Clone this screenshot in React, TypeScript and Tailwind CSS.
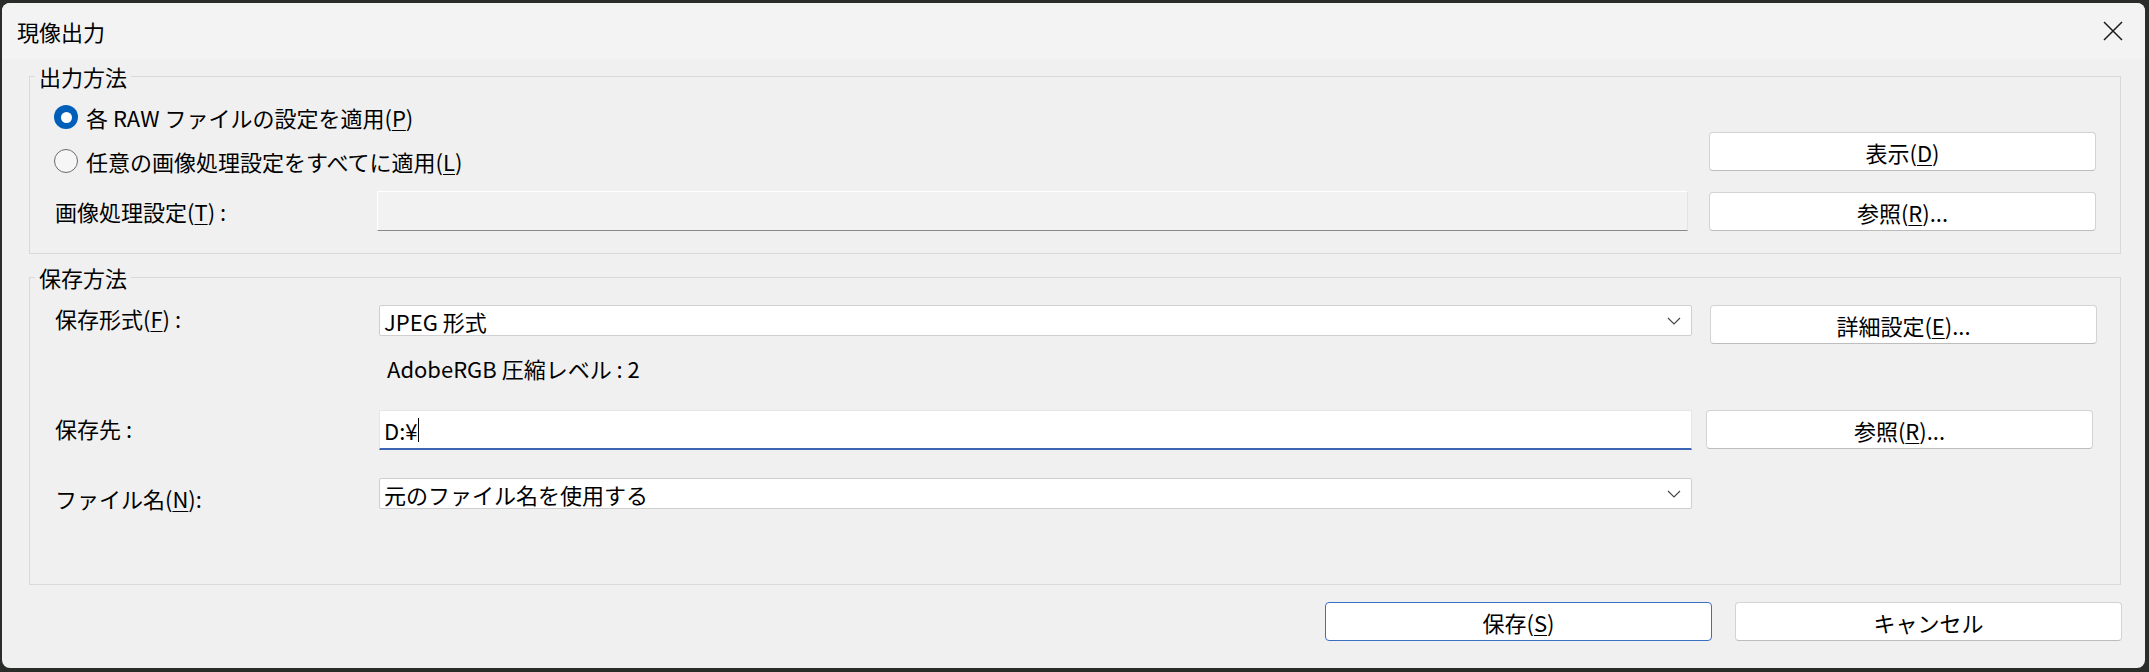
import type { ReactNode } from 'react'

function Key({ children }: { children: ReactNode }) {
  return <span className="underline decoration-1 underline-offset-[3px]">{children}</span>
}

function Button({ children, className = '', focused = false }: { children: ReactNode; className?: string; focused?: boolean }) {
  return (
    <button
      className={`flex h-[39px] w-[387px] items-center justify-center rounded-[4px] border bg-white leading-[22px] ${
        focused ? 'border-[#3b6fc4]' : 'border-[#d3d3d3] border-b-[#bdbdbd]'
      } ${className}`}
    >
      {children}
    </button>
  )
}

function Chevron() {
  return (
    <svg width="14" height="8" viewBox="0 0 14 8" fill="none">
      <polyline points="1,1 7,7 13,1" stroke="#444" strokeWidth="1.1" />
    </svg>
  )
}

function Combo({ value }: { value: string }) {
  return (
    <div className="flex h-[31px] w-[1313px] items-center justify-between rounded-[2px] border border-[#cfcfcf] bg-white pl-[4px] pr-[10px] leading-[22px]">
      <span>{value}</span>
      <Chevron />
    </div>
  )
}

function Radio({ checked, children }: { checked?: boolean; children: ReactNode }) {
  return (
    <div className="-ml-[1px] flex h-[22px] items-center gap-[8px]">
      {checked ? (
        <span className="flex h-[24px] w-[24px] shrink-0 items-center justify-center rounded-full bg-[#005fb8]">
          <span className="h-[11px] w-[11px] rounded-full bg-white" />
        </span>
      ) : (
        <span className="h-[24px] w-[24px] shrink-0 rounded-full border-[1.5px] border-[#6b6b6b] bg-[#f6f6f6]" />
      )}
      <span className="leading-[22px]">{children}</span>
    </div>
  )
}

export default function App() {
  return (
    <div className="h-[672px] w-full overflow-hidden bg-[#2a2c2a] pl-[2px] pt-[3px] font-['Noto_Sans_CJK_JP','Noto_Sans',sans-serif] text-[22px] text-black">
      <div className="flex h-[665px] w-[2143px] flex-col rounded-[8px] bg-[#f0f0f0]">
        {/* title bar */}
        <div className="flex h-[56px] items-center justify-between rounded-t-[8px] bg-[#f3f3f3] pl-[15px] pr-[22px]">
          <span className="leading-[22px]">現像出力</span>
          <svg width="20" height="20" viewBox="0 0 20 20" fill="none">
            <path d="M1 1L19 19M19 1L1 19" stroke="#1a1a1a" strokeWidth="1.5" />
          </svg>
        </div>

        {/* 出力方法 */}
        <div className="relative ml-[27px] mt-[17px] flex w-[2092px] border border-[#d9d9d9]">
          <span className="absolute left-[5px] top-[-12px] bg-[#f0f0f0] px-[4px] leading-[22px]">出力方法</span>
          <div className="flex w-[1658px] flex-col pb-[22px] pl-[25px] pt-[29px]">
            <Radio checked>
              各 RAW ファイルの設定を適用(<Key>P</Key>)
            </Radio>
            <div className="mt-[22px]">
              <Radio>
                任意の画像処理設定をすべてに適用(<Key>L</Key>)
              </Radio>
            </div>
            <div className="mt-[19px] flex h-[40px] items-center">
              <span className="w-[322px] leading-[22px]">
                画像処理設定(<Key>T</Key>) :
              </span>
              <div className="h-[40px] w-[1311px] border border-[#e4e4e4] border-b-[#8a8a8a] border-l-white border-t-white bg-[#f2f2f2]" />
            </div>
          </div>
          <div className="ml-[21px] flex w-[387px] flex-col gap-[21px] pt-[55px]">
            <Button>
              表示(<Key>D</Key>)
            </Button>
            <Button>
              参照(<Key>R</Key>)...
            </Button>
          </div>
        </div>

        {/* 保存方法 */}
        <div className="relative ml-[27px] mt-[23px] w-[2092px] border border-[#d9d9d9] pb-[75px] pl-[25px] pt-[27px]">
          <span className="absolute left-[5px] top-[-12px] bg-[#f0f0f0] px-[4px] leading-[22px]">保存方法</span>
          <div className="flex items-start">
            <span className="w-[324px] pt-[2px] leading-[22px]">
              保存形式(<Key>F</Key>) :
            </span>
            <Combo value="JPEG 形式" />
            <Button className="ml-[18px]">
              詳細設定(<Key>E</Key>)...
            </Button>
          </div>
          <div className="mt-[9px] h-[30px] pl-[332px] leading-[30px]">AdobeRGB 圧縮レベル : 2</div>
          <div className="mt-[27px] flex items-start">
            <span className="w-[324px] pt-[7px] leading-[22px]">保存先 :</span>
            <div className="flex h-[40px] w-[1313px] items-center border border-[#e6e6e6] border-b-2 border-b-[#3e65b3] bg-white pl-[4px] leading-[22px]">
              <span>D:¥</span>
              <span className="ml-[1px] h-[24px] w-px bg-black" />
            </div>
            <Button className="ml-[14px]">
              参照(<Key>R</Key>)...
            </Button>
          </div>
          <div className="mt-[28px] flex items-start">
            <span className="w-[324px] pt-[9px] leading-[22px]">
              ファイル名(<Key>N</Key>):
            </span>
            <Combo value="元のファイル名を使用する" />
          </div>
        </div>

        {/* footer buttons */}
        <div className="mt-[17px] flex justify-end gap-[23px] pr-[23px]">
          <Button focused className="w-[386px]">
            保存(<Key>S</Key>)
          </Button>
          <Button className="w-[386px]">キャンセル</Button>
        </div>
      </div>
    </div>
  )
}
